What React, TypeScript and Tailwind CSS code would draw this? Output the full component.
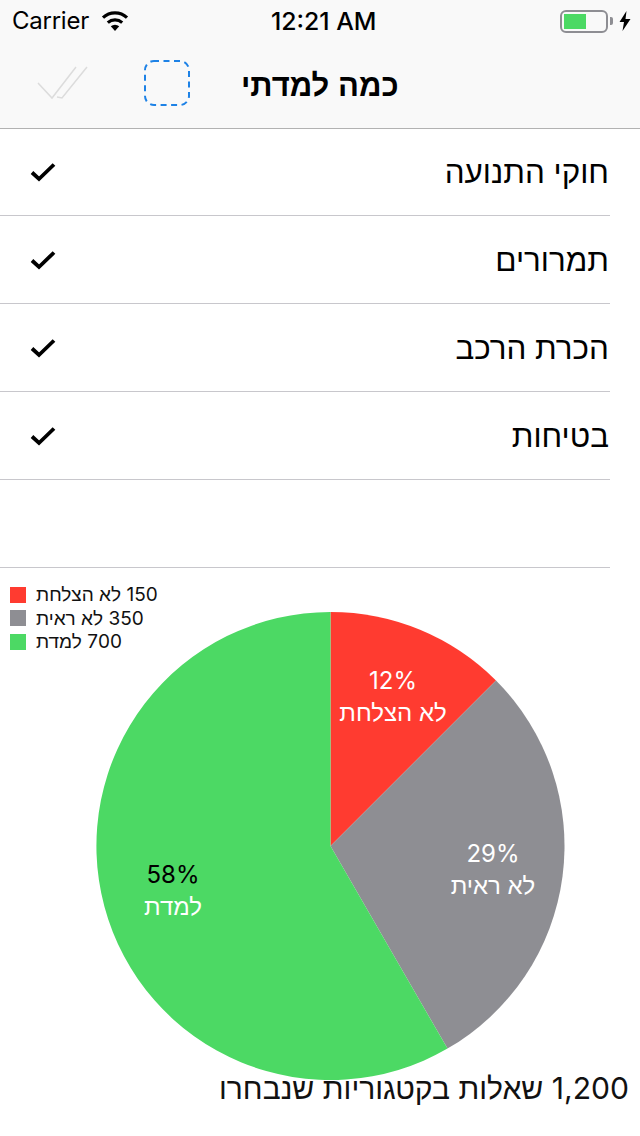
const font = "font-['Inter','Liberation_Sans',sans-serif]";

function Row({ label }: { label: string }) {
  return (
    <div className="flex h-[88px] w-[610px] items-center justify-between border-b border-[#c8c7cc] pr-[1px] pl-[30px]">
      <svg width="26" height="20" viewBox="0 0 26 20">
        <path d="M2 10.5 L9 17 L24 2.5" fill="none" stroke="#000" strokeWidth="3.8" />
      </svg>
      <span dir="rtl" className="mt-[2px] text-[31.4px] leading-none text-black font-['Liberation_Sans',sans-serif]">{label}</span>
    </div>
  );
}

function Legend({ color, text }: { color: string; text: string }) {
  return (
    <div className="flex h-[23.6px] items-center gap-[10px]">
      <span className="h-4 w-4" style={{ backgroundColor: color }} />
      <span dir="rtl" className="text-[19px] leading-none text-[#111] font-['Inter','Liberation_Sans',sans-serif]">{text}</span>
    </div>
  );
}

function SliceLabel({ pct, name, pos, pctColor }: { pct: string; name: string; pos: string; pctColor: string }) {
  return (
    <div className={`absolute flex w-[140px] flex-col items-center ${pos}`}>
      <span className={`text-[24px] leading-[32px] font-['Inter',sans-serif] ${pctColor}`}>{pct}</span>
      <span dir="rtl" className="text-[24px] leading-[32px] text-white font-['Liberation_Sans',sans-serif]">{name}</span>
    </div>
  );
}

export default function App() {
  return (
    <div className={`flex h-[1136px] w-[640px] flex-col overflow-hidden bg-white ${font}`}>
      <div className="h-[129px] shrink-0 border-b border-[#b2b2b2] bg-[#f9f9f9]">
        <div className="relative flex h-[40px] items-center justify-between pt-[2px] pr-[9px] pl-[12px]">
          <div className="flex items-center gap-[11px]">
            <span className="text-[24px] leading-none text-black font-['Inter',sans-serif] tracking-[-0.25px]">Carrier</span>
            <svg width="30" height="22" viewBox="0 0 30 22">
              <path d="M15 21 L10.8 16.2 A6.4 6.4 0 0 1 19.2 16.2 Z" fill="#000" />
              <path d="M7.8 12.6 A11 11 0 0 1 22.2 12.6" fill="none" stroke="#000" strokeWidth="3.2" />
              <path d="M3 7.6 A17.5 17.5 0 0 1 27 7.6" fill="none" stroke="#000" strokeWidth="3.2" />
            </svg>
          </div>
          <span className="absolute left-[271px] text-[24.8px] leading-none font-medium text-black font-['Inter',sans-serif]">12:21 AM</span>
          <div className="flex items-center gap-[6px]">
            <div className="flex items-center">
              <div className="h-[23px] w-[48px] rounded-[6px] border-2 border-[#8e8e93] p-[2px]">
                <div className="h-full w-[22px] bg-[#4cd964]" />
              </div>
              <div className="ml-[2px] h-[8px] w-[3px] rounded-r-[2px] bg-[#8e8e93]" />
            </div>
            <svg width="12" height="20" viewBox="0 0 12 20">
              <path d="M7.5 0 L0.5 11 H5 L3.5 20 L11.5 8 H6.5 Z" fill="#000" />
            </svg>
          </div>
        </div>
        <div className="relative flex h-[87px] items-center">
          <svg width="54" height="36" viewBox="0 0 54 36" className="ml-[36px] mt-[-1px]">
            <path d="M2 18 L16 33 L40 2" fill="none" stroke="#dcdcdc" strokeWidth="1.5" />
            <path d="M21 32 L26 33 L51 2" fill="none" stroke="#dcdcdc" strokeWidth="1.5" />
          </svg>
          <svg width="46" height="46" viewBox="0 0 46 46" className="ml-[54px] mt-[-2px]">
            <rect x="1" y="1" width="44" height="44" rx="9" fill="none" stroke="#1e82e6" strokeWidth="2" strokeDasharray="6 4.5" strokeDashoffset="1" />
          </svg>
          <span dir="rtl" className="absolute left-[241px] mt-[3px] text-[31px] leading-none font-bold text-black font-['Liberation_Sans',sans-serif]">כמה למדתי</span>
        </div>
      </div>

      <div className="mt-[-1px] flex flex-col">
        <Row label="חוקי התנועה" />
        <Row label="תמרורים" />
        <Row label="הכרת הרכב" />
        <Row label="בטיחות" />
      </div>

      <div className="mt-[87px] h-px w-[610px] shrink-0 bg-[#c8c7cc]" />

      <div className="relative flex-1">
        <div className="ml-[10px] pt-[15px]">
          <Legend color="#ff3b30" text="150 לא הצלחת" />
          <Legend color="#8e8e93" text="350 לא ראית" />
          <Legend color="#4cd964" text="700 למדת" />
        </div>
        <svg width="640" height="568" viewBox="0 568 640 568" className="absolute top-0 left-0">
          <path d="M330.5 846 L330.5 612 A234 234 0 0 1 496 680.5 Z" fill="#ff3b30" />
          <path d="M330.5 846 L496 680.5 A234 234 0 0 1 447.5 1048.6 Z" fill="#8e8e93" />
          <path d="M330.5 846 L447.5 1048.6 A234 234 0 1 1 330.5 612 Z" fill="#4cd964" />
        </svg>
        <SliceLabel pct="12%" name="לא הצלחת" pos="left-[323px] top-[97px]" pctColor="text-white" />
        <SliceLabel pct="29%" name="לא ראית" pos="left-[423px] top-[270px]" pctColor="text-white" />
        <SliceLabel pct="58%" name="למדת" pos="left-[103px] top-[291px]" pctColor="text-black" />
        <span dir="rtl" className="absolute right-[11px] top-[502px] text-[30.1px] leading-[36px] whitespace-nowrap text-[#111] font-['Inter','Liberation_Sans',sans-serif]">
          1,200 שאלות בקטגוריות שנבחרו
        </span>
      </div>
    </div>
  );
}
